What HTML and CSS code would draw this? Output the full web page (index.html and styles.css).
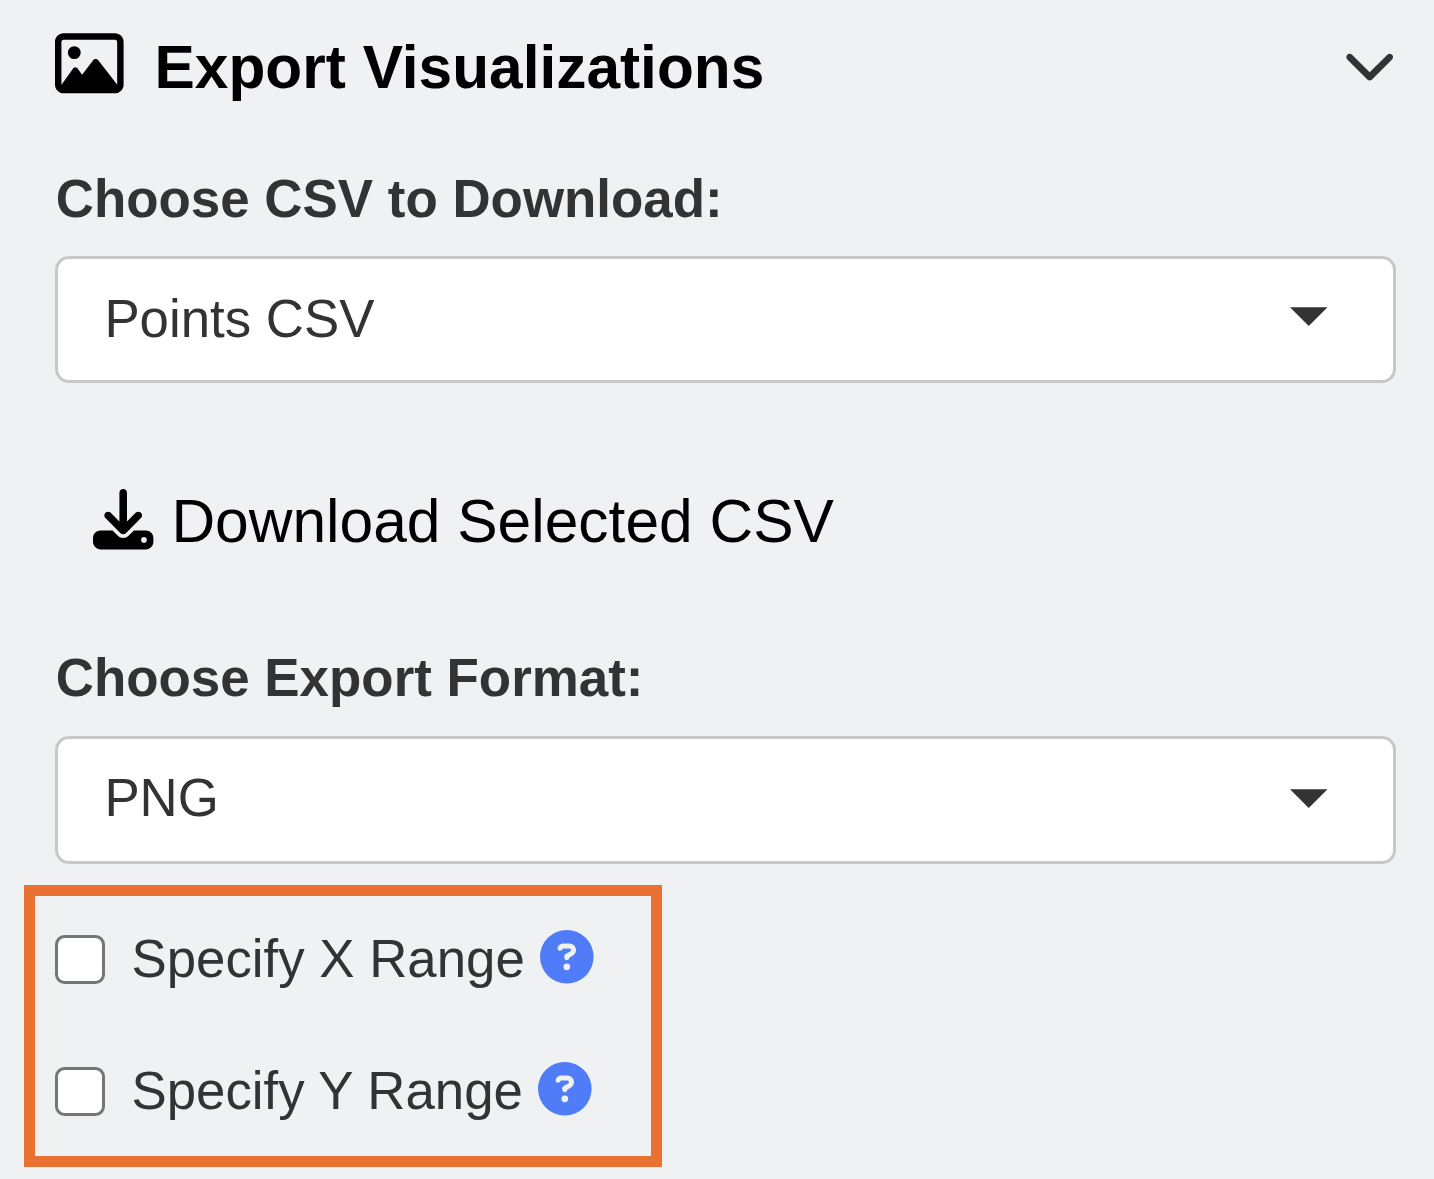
FILE: index.html
```html
<!DOCTYPE html>
<html lang="en">
<head>
<meta charset="utf-8">
<title>Export Visualizations</title>
<link rel="stylesheet" href="styles.css">
</head>
<body>
<main class="panel">
  <header class="panel-header">
    <svg class="icon-image" viewBox="0 0 512 512"><path d="M448 80c8.800 0 16 7.200 16 16V415.800l-5-6.500-136-176c-4.500-5.900-11.600-9.300-19-9.300s-14.400 3.400-19 9.300L202 340.700l-30.500-42.700C167 291.700 159.800 288 152 288s-15 3.700-19.500 10.100l-80 112L48 416.300l0-.3V96c0-8.800 7.200-16 16-16H448zM64 32C28.700 32 0 60.700 0 96V416c0 35.300 28.700 64 64 64H448c35.300 0 64-28.700 64-64V96c0-35.300-28.700-64-64-64H64zm80 192a48 48 0 1 0 0-96 48 48 0 1 0 0 96z"/></svg>
    <h1 class="title">Export Visualizations</h1>
    <svg class="icon-chevron" viewBox="0 0 512 512"><path d="M233.400 406.600c12.500 12.500 32.800 12.500 45.300 0l192-192c12.500-12.500 12.500-32.800 0-45.300s-32.800-12.500-45.300 0L256 338.700 86.600 169.400c-12.500-12.500-32.800-12.500-45.300 0s-12.500 32.800 0 45.300l192 192z"/></svg>
  </header>

  <div class="label label-csv">Choose CSV to Download:</div>
  <div class="select select-csv">
    <span class="select-value">Points CSV</span>
    <svg class="caret" viewBox="0 0 38 19"><path d="M0 0H38L19 19z"/></svg>
  </div>

  <div class="download">
    <svg class="icon-download" viewBox="0 0 512 512"><path d="M288 32c0-17.700-14.300-32-32-32s-32 14.300-32 32V274.700l-73.400-73.400c-12.500-12.500-32.800-12.500-45.300 0s-12.500 32.800 0 45.300l128 128c12.500 12.500 32.800 12.500 45.300 0l128-128c12.500-12.500 12.500-32.800 0-45.300s-32.800-12.500-45.300 0L288 274.700V32zM64 352c-35.300 0-64 28.700-64 64v32c0 35.300 28.700 64 64 64H448c35.300 0 64-28.700 64-64V416c0-35.300-28.700-64-64-64H346.500l-45.300 45.300c-25 25-65.500 25-90.500 0L165.500 352H64zm368 56a24 24 0 1 1 0 48 24 24 0 1 1 0-48z"/></svg>
    <span>Download Selected CSV</span>
  </div>

  <div class="label label-format">Choose Export Format:</div>
  <div class="select select-format">
    <span class="select-value">PNG</span>
    <svg class="caret" viewBox="0 0 38 19"><path d="M0 0H38L19 19z"/></svg>
  </div>

  <section class="ranges">
    <label class="range">
      <input class="checkbox" type="checkbox">
      <span class="range-text">Specify X Range</span>
      <svg class="help" viewBox="0 0 512 512"><path d="M256 512A256 256 0 1 0 256 0a256 256 0 1 0 0 512zM169.800 165.300c7.900-22.300 29.100-37.300 52.800-37.300h58.300c34.900 0 63.100 28.300 63.100 63.100c0 22.600-12.100 43.500-31.700 54.800L280 264.400c-.2 13-10.900 23.600-24 23.600c-13.300 0-24-10.700-24-24V250.500c0-8.600 4.600-16.500 12.100-20.800l44.300-25.400c4.700-2.700 7.600-7.700 7.600-13.100c0-8.400-6.800-15.100-15.100-15.100H222.600c-3.400 0-6.400 2.100-7.500 5.300l-.4 1.200c-4.400 12.500-18.200 19-30.600 14.600s-19-18.200-14.600-30.600l.4-1.200zM224 352a32 32 0 1 1 64 0 32 32 0 1 1 -64 0z"/></svg>
    </label>
    <label class="range">
      <input class="checkbox" type="checkbox">
      <span class="range-text">Specify Y Range</span>
      <svg class="help" viewBox="0 0 512 512"><path d="M256 512A256 256 0 1 0 256 0a256 256 0 1 0 0 512zM169.800 165.300c7.900-22.300 29.100-37.300 52.800-37.300h58.300c34.900 0 63.100 28.300 63.100 63.100c0 22.600-12.100 43.500-31.700 54.800L280 264.400c-.2 13-10.900 23.600-24 23.600c-13.300 0-24-10.700-24-24V250.500c0-8.600 4.600-16.500 12.100-20.800l44.300-25.400c4.700-2.700 7.600-7.700 7.600-13.100c0-8.400-6.800-15.100-15.100-15.100H222.600c-3.400 0-6.400 2.100-7.500 5.300l-.4 1.200c-4.400 12.500-18.200 19-30.600 14.600s-19-18.200-14.600-30.600l.4-1.200zM224 352a32 32 0 1 1 64 0 32 32 0 1 1 -64 0z"/></svg>
    </label>
  </section>
</main>
</body>
</html>
```
FILE: styles.css
```css
* {
  box-sizing: border-box;
}

body {
  margin: 0;
  background: #eff1f3;
  color: #333;
  font-family: "Liberation Sans", Arial, sans-serif;
  font-size: 52.8px;
  line-height: 60px;
  white-space: nowrap;
}

svg {
  display: block;
  flex: none;
  fill: currentColor;
  overflow: visible;
}

.panel {
  display: flex;
  flex-direction: column;
  height: 1179px;
  padding: 29px 38px 0 55px;
  overflow: hidden;
}

.panel-header {
  display: flex;
  align-items: flex-start;
  height: 70px;
}

.icon-image {
  width: 68.6px;
  height: 68.6px;
  margin-top: 0.400px;
  margin-right: 31px;
  color: #000;
}

.title {
  flex: 1;
  margin: 3px 0 0;
  color: #000;
  font-size: 60.4px;
  line-height: 70px;
}

.icon-chevron {
  width: 53.400px;
  height: 53.400px;
  margin-top: 8px;
  margin-right: -0.300px;
}

.label {
  height: 60px;
  padding-left: 0.700px;
  font-size: 52.9px;
  font-weight: bold;
}

.label-csv {
  margin-top: 70px;
}

.select {
  display: flex;
  align-items: flex-start;
  justify-content: space-between;
  padding: 30px 65.600px 0 46.400px;
  border: 3px solid #c8c8c8;
  border-radius: 14px;
  background: #fff;
}

.select-csv {
  height: 127px;
  margin-top: 27px;
}

.select-format {
  height: 128px;
  margin-top: 28px;
  padding-top: 29px;
}

.caret {
  width: 37.500px;
  height: 19px;
  margin-top: 18.300px;
}

.select-format .caret {
  margin-top: 20.700px;
}

.download {
  display: flex;
  align-items: flex-start;
  gap: 18px;
  height: 70px;
  margin-top: 103px;
  padding-left: 38px;
  color: #000;
  font-size: 60.5px;
  line-height: 70px;
}

.icon-download {
  width: 60.4px;
  height: 60.4px;
  margin-top: 2.700px;
}

.label-format {
  margin-top: 92px;
}

.ranges {
  display: flex;
  flex-direction: column;
  gap: 72px;
  width: 638px;
  height: 282px;
  margin: 21px 0 0 -31px;
  padding: 33px 0 0 20px;
  border: 11px solid #e97132;
}

.range {
  display: flex;
  align-items: flex-start;
  height: 60px;
}

.checkbox {
  flex: none;
  appearance: none;
  width: 49.500px;
  height: 49.500px;
  margin: 5.800px 27px 0 0;
  border: 3px solid #767676;
  border-radius: 9.500px;
  background: #fff;
}

.help {
  width: 53.600px;
  height: 53.600px;
  margin: 0.800px 0 0 14.800px;
  color: #507cf7;
}
```
